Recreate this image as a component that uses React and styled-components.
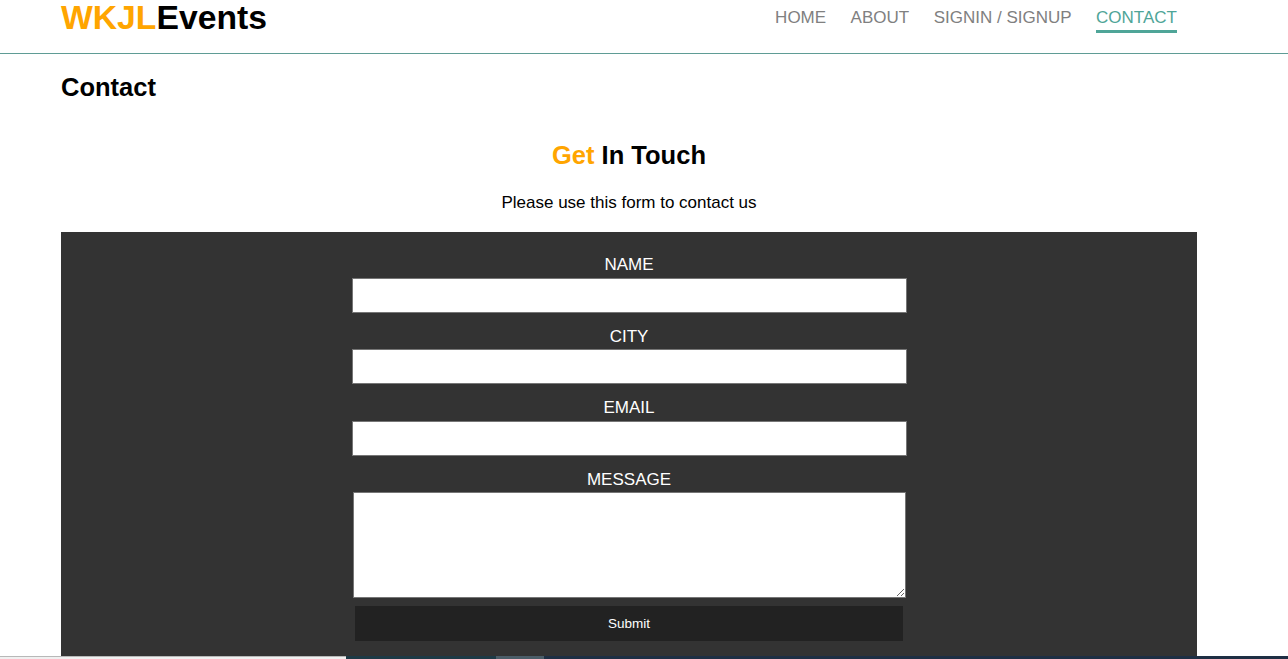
import React from 'react'
import styled, { createGlobalStyle } from 'styled-components'

const GlobalStyle = createGlobalStyle`
  html, body {
    margin: 0;
    padding: 0;
    overflow: hidden;
    background: #fff;
    font-family: 'Liberation Sans', Arial, sans-serif;
    font-size: 17px;
    color: #000;
  }
  * {
    box-sizing: border-box;
  }
`

const Header = styled.header`
  height: 54px;
  border-bottom: 1px solid #5f9c95;
  display: flex;
  justify-content: space-between;
  align-items: flex-start;
  padding: 0 111px 0 61px;
`

const Logo = styled.div`
  font-size: 33.7px;
  line-height: 34px;
  font-weight: 700;
  color: #000;
  span {
    color: #ffa500;
  }
`

const Nav = styled.nav`
  display: flex;
  gap: 24.5px;
  margin-top: 9px;
`

const NavLink = styled.a`
  font-size: 17px;
  line-height: 17px;
  text-decoration: none;
  padding-bottom: 4px;
  color: ${(p) => (p.$active ? '#4fa598' : '#808080')};
  border-bottom: 3px solid ${(p) => (p.$active ? '#4fa598' : 'transparent')};
`

const Main = styled.main`
  width: 1136px;
  margin-left: 61px;
`

const PageTitle = styled.h2`
  margin: 17.5px 0 0;
  font-size: 25.5px;
  line-height: 30px;
  font-weight: 700;
`

const Heading = styled.h3`
  margin: 38px 0 0;
  text-align: center;
  font-size: 25.5px;
  line-height: 30px;
  font-weight: 700;
  span {
    color: #ffa500;
  }
`

const Intro = styled.p`
  margin: 23px 0 0;
  text-align: center;
  line-height: 20px;
`

const FormBox = styled.form`
  margin-top: 19.3px;
  background: #333;
  padding: 23.5px 0 17.5px;
  display: flex;
  flex-direction: column;
  align-items: center;
`

const Field = styled.div`
  width: 555px;
  display: flex;
  flex-direction: column;
  align-items: center;
  margin-bottom: ${(p) => (p.$last ? '8px' : '14px')};
`

const Label = styled.label`
  color: #fff;
  line-height: 20px;
  margin-bottom: 2.5px;
  text-transform: uppercase;
`

const Input = styled.input`
  width: 555px;
  height: 35px;
  border: 1px solid #767676;
  background: #fff;
`

const TextArea = styled.textarea`
  width: 553px;
  height: 106px;
  border: 1px solid #767676;
  background: #fff;
  resize: both;
`

const Submit = styled.button`
  width: 548px;
  height: 35px;
  border: none;
  background: #222;
  color: #fff;
  font-family: 'Liberation Sans', Arial, sans-serif;
  font-size: 13.5px;
`

const TaskStrip = styled.div`
  position: fixed;
  left: 0;
  right: 0;
  bottom: 0;
  height: 3px;
  display: flex;
`

const Seg = styled.div`
  width: ${(p) => p.$w || 'auto'};
  flex: ${(p) => (p.$w ? 'none' : 1)};
  background: ${(p) => p.$bg};
  border-top: ${(p) => (p.$light ? '1px solid #b8b8b8' : 'none')};
`

const fields = ['Name', 'City', 'Email']

const App = () => {
  return (
    <>
      <GlobalStyle />
      <Header>
        <Logo>
          <span>WKJL</span>Events
        </Logo>
        <Nav>
          <NavLink href='#'>HOME</NavLink>
          <NavLink href='#'>ABOUT</NavLink>
          <NavLink href='#'>SIGNIN / SIGNUP</NavLink>
          <NavLink href='#' $active>
            CONTACT
          </NavLink>
        </Nav>
      </Header>
      <Main>
        <PageTitle>Contact</PageTitle>
        <Heading>
          <span>Get</span> In Touch
        </Heading>
        <Intro>Please use this form to contact us</Intro>
        <FormBox onSubmit={(e) => e.preventDefault()}>
          {fields.map((f) => (
            <Field key={f}>
              <Label>{f}</Label>
              <Input type='text' />
            </Field>
          ))}
          <Field $last>
            <Label>Message</Label>
            <TextArea />
          </Field>
          <Submit type='submit'>Submit</Submit>
        </FormBox>
      </Main>
      <TaskStrip>
        <Seg $w='346px' $bg='#f0f0f0' $light />
        <Seg $w='150px' $bg='#1e3a46' />
        <Seg $w='48px' $bg='#4b5d68' />
        <Seg $bg='#1e2f44' />
      </TaskStrip>
    </>
  )
}

export default App
